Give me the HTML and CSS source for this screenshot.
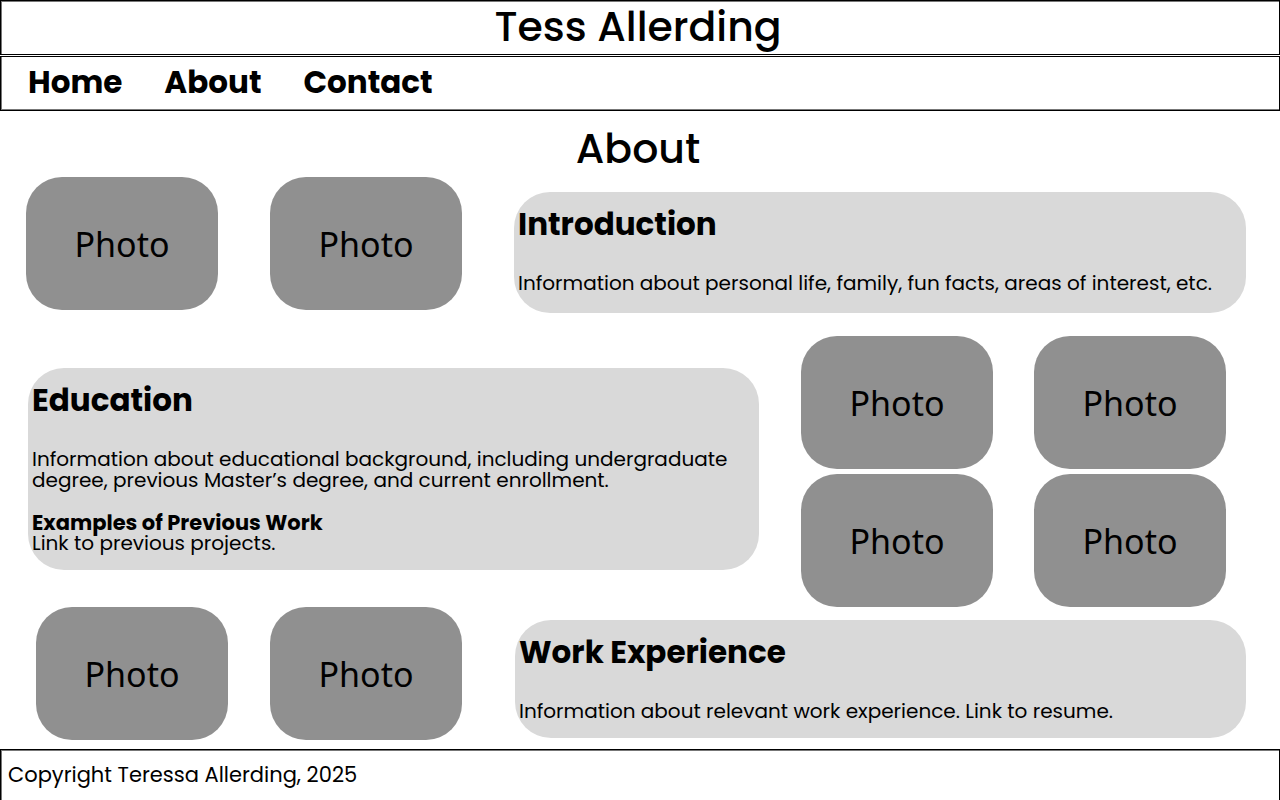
FILE: index.html
```html
<!DOCTYPE html>
<html lang="en">
<head>
<meta charset="utf-8">
<meta name="viewport" content="width=device-width, initial-scale=1">
<title>About – Tess Allerding</title>
<link rel="stylesheet" href="styles.css">
</head>
<body>
<header class="site-header"><p class="site-name">Tess Allerding</p></header>
<nav class="site-nav">
  <a href="#home">Home</a>
  <a href="#about">About</a>
  <a href="#contact">Contact</a>
</nav>
<main class="content">
  <h1 class="page-title">About</h1>
  <section class="row row-intro">
    <div class="photo">Photo</div>
    <div class="photo">Photo</div>
    <article class="card">
      <h2>Introduction</h2>
      <p>Information about personal life, family, fun facts, areas of interest, etc.</p>
    </article>
  </section>
  <section class="row row-education">
    <article class="card">
      <h2>Education</h2>
      <p>Information about educational background, including undergraduate degree, previous Master’s degree, and current enrollment.</p>
      <h3>Examples of Previous Work</h3>
      <p>Link to previous projects.</p>
    </article>
    <div class="gallery">
      <div class="photo">Photo</div>
      <div class="photo">Photo</div>
      <div class="photo">Photo</div>
      <div class="photo">Photo</div>
    </div>
  </section>
  <section class="row row-work">
    <div class="photo">Photo</div>
    <div class="photo">Photo</div>
    <article class="card">
      <h2>Work Experience</h2>
      <p>Information about relevant work experience. Link to resume.</p>
    </article>
  </section>
</main>
<footer class="site-footer"><p>Copyright Teressa Allerding, 2025</p></footer>
</body>
</html>
```
FILE: styles.css
```css
* {
  box-sizing: border-box;
}

body {
  margin: 0;
  min-height: 100vh;
  display: flex;
  flex-direction: column;
  background: #fff;
  color: #000;
  font-family: Poppins, Inter, "Liberation Sans", sans-serif;
  font-size: 21px;
  line-height: 21px;
}

h1, h2, h3, p {
  margin: 0;
}

.site-header {
  border: 1px solid #000;
  box-shadow: inset 0 1px #777, inset 1px 0 #777;
  padding: 0 4px 1px 0;
  text-align: center;
}

.site-name,
.page-title {
  font-size: 41px;
  font-weight: 500;
  line-height: 52px;
}

.site-nav {
  margin-top: 1px;
  border: 1px solid #000;
  box-shadow: inset 0 -1px #777, inset 1px 0 #777;
  display: flex;
  gap: 42px;
  padding: 0 27px 3px;
}

.site-nav a {
  color: #000;
  font-size: 31px;
  font-weight: 700;
  line-height: 50px;
  text-decoration: none;
}

.content {
  flex: 1;
}

.page-title {
  padding: 12px 4px 2px 0;
  text-align: center;
}

.row {
  display: grid;
  align-items: start;
}

.row-intro {
  grid-template-columns: 192fr 192fr 732fr;
  column-gap: 52px;
  padding: 0 34px 0 26px;
}

.row-education {
  grid-template-columns: 731fr 425fr;
  column-gap: 42px;
  margin-top: 23px;
  padding: 0 54px 0 28px;
}

.row-work {
  grid-template-columns: 192fr 192fr 742fr;
  column-gap: 42px;
  padding: 0 34px 9px 36px;
}

.gallery {
  display: grid;
  grid-template-columns: 1fr 1fr;
  gap: 5px 41px;
}

.photo {
  display: flex;
  align-items: center;
  justify-content: center;
  min-height: 133px;
  border-radius: 36px;
  background: #909090;
  font-family: "Noto Sans", sans-serif;
  font-size: 34px;
  line-height: 40px;
}

.card {
  padding: 16px 4px;
  border-radius: 36px;
  background: #d9d9d9;
}

.card p {
  font-size: 20px;
}

.row-intro .card {
  margin-top: 15px;
  padding-bottom: 19px;
}

.row-education .card {
  margin-top: 32px;
}

.row-work .card {
  margin: 13px 0 0 11px;
}

.card h2 {
  margin-bottom: 32px;
  font-size: 31px;
  font-weight: 700;
  line-height: 33px;
}

.card h3 {
  margin-top: 21px;
  font-size: 21px;
  font-weight: 700;
  line-height: 21px;
}

.site-footer {
  min-height: 51px;
  border: 1px solid #000;
  border-bottom: 0;
  box-shadow: inset 0 1px #777, inset 1px 0 #777;
  padding: 14px 7px;
}
```
